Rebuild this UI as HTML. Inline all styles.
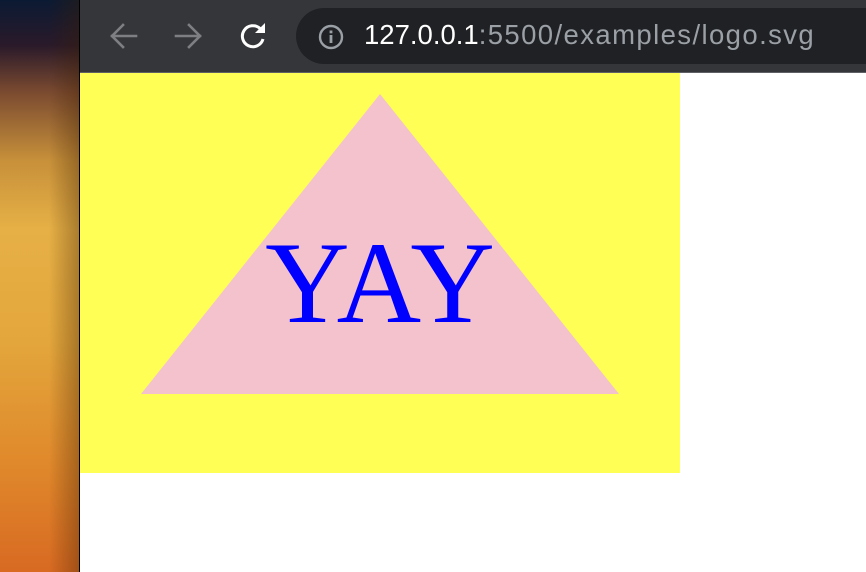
<!DOCTYPE html>
<html><head><style>
html,body{margin:0;padding:0;width:866px;height:572px;overflow:hidden;background:#fff;font-family:"Liberation Sans",sans-serif}
.left{position:absolute;left:0;top:0;width:79px;height:572px;background:linear-gradient(180deg,#0b1a33 0%,#2a1a2a 8%,#7a4a30 16%,#c7903a 28%,#e6b046 40%,#e3a63c 60%,#e08a2c 80%,#d86a22 100%)}
.left:after{content:"";position:absolute;right:0;top:0;width:30px;height:100%;background:linear-gradient(90deg,rgba(0,0,0,0),rgba(60,30,0,.35))}
.edge{position:absolute;left:79px;top:0;width:1px;height:572px;background:#000}
.bar{position:absolute;left:80px;top:0;width:786px;height:72px;background:#35363a}
.line{position:absolute;left:80px;top:72px;width:786px;height:1px;background:#5f6065}
.pill{position:absolute;left:296px;top:8px;width:600px;height:56px;border-radius:28px;background:#202124}
.url{position:absolute;left:364px;top:19px;font-size:27.5px;color:#fff;white-space:nowrap}
.url span{color:#9aa0a6;letter-spacing:1.4px}
</style></head><body>
<div class="left"></div><div class="edge"></div>
<div class="bar"></div><div class="line"></div>
<svg style="position:absolute;left:0;top:0" width="866" height="72">
<g stroke="#7d7f83" stroke-width="2.6" fill="none" stroke-linecap="square">
<path d="M112 36H136M112 36L123 25M112 36L123 47"/>
<path d="M176 36H200M200 36L189 25M200 36L189 47"/>
</g>
<path d="M263 39A10.5 10.5 0 1 1 260 28.5" stroke="#fff" stroke-width="3" fill="none"/>
<path d="M265 23V33H255Z" fill="#fff"/>
</svg>
<div class="pill"></div>
<svg style="position:absolute;left:318px;top:24px" width="26" height="26"><circle cx="13" cy="13" r="11" stroke="#9aa0a6" stroke-width="2.4" fill="none"/><rect x="11.6" y="11" width="2.8" height="8" fill="#9aa0a6"/><rect x="11.6" y="6.5" width="2.8" height="2.8" fill="#9aa0a6"/></svg>
<div class="url">127.0.0.1<span>:5500/examples/logo.svg</span></div>
<svg style="position:absolute;left:80px;top:73px" width="600" height="400">
<rect width="600" height="400" fill="#ffff55"/>
<polygon points="300,21 539,321 61,321" fill="#f4c2cd"/>
<text x="300" y="249" text-anchor="middle" font-family="Liberation Serif,serif" font-size="117" fill="#0000ff">YAY</text>
</svg>
</body></html>
